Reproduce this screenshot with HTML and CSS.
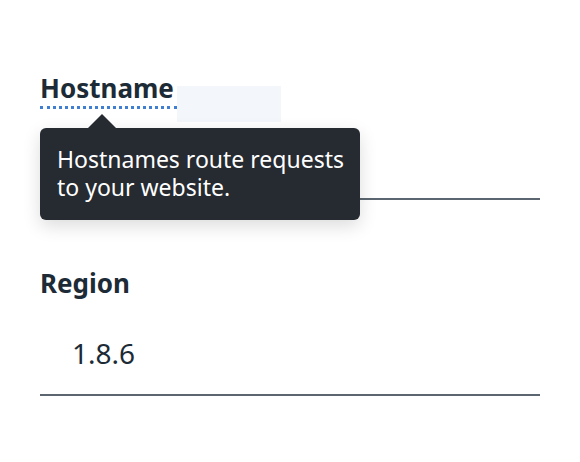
FILE: index.html
```html
<!DOCTYPE html>
<html>
<head>
<meta charset="utf-8">
<link rel="stylesheet" href="styles.css">
</head>
<body>
<form class="form">
  <div class="field">
    <div class="label-row">
      <span class="label tip-trigger">Hostname</span>
      <span class="focus-box"></span>
      <div class="tooltip">
        <span class="caret"></span>
        Hostnames route requests<br>to your website.
      </div>
    </div>
    <div class="input input-empty"></div>
  </div>
  <div class="field">
    <div class="label-row label-row-plain">
      <span class="label">Region</span>
    </div>
    <div class="input input-value">1.8.6</div>
  </div>
</form>
</body>
</html>
```
FILE: styles.css
```css
html, body { margin: 0; padding: 0; background: #fff; }
body { font-family: "Noto Sans", "Open Sans", sans-serif; color: #1c2b36; }
.form { padding: 72px 40px 0 40px; display: flex; flex-direction: column; gap: 67px; }
.field { display: flex; flex-direction: column; }
.label-row { position: relative; display: flex; align-items: flex-start; height: 50px; }
.label-row-plain { height: 32px; }
.label { font-size: 26px; font-weight: 700; line-height: 32px; color: #1c2b36; letter-spacing: 0; }
.tip-trigger { border-bottom: 3px dotted #3f7ed1; height: 34px; box-sizing: border-box; height: 37px; padding-right: 3px; }
.focus-box { width: 104px; height: 36px; margin-top: 14px; background: #f3f7fc; }
.tooltip { position: absolute; left: 0; top: 56px; width: 320px; box-sizing: border-box; padding: 17px 16px 19px 17px; background: #262a31; color: #fff; font-size: 23px; line-height: 28px; border-radius: 6px; box-shadow: 0 6px 18px rgba(0,0,0,0.14); z-index: 2; }
.caret { position: absolute; left: 48px; top: -14px; width: 0; height: 0; border-left: 14px solid transparent; border-right: 14px solid transparent; border-bottom: 14px solid #262a31; }
.input { box-sizing: border-box; border-bottom: 2px solid #5b6670; color: #1c2b36; }
.input-empty { height: 78px; }
.input-value { padding: 34px 0 21px 32px; font-size: 28px; line-height: 40px; }
```
